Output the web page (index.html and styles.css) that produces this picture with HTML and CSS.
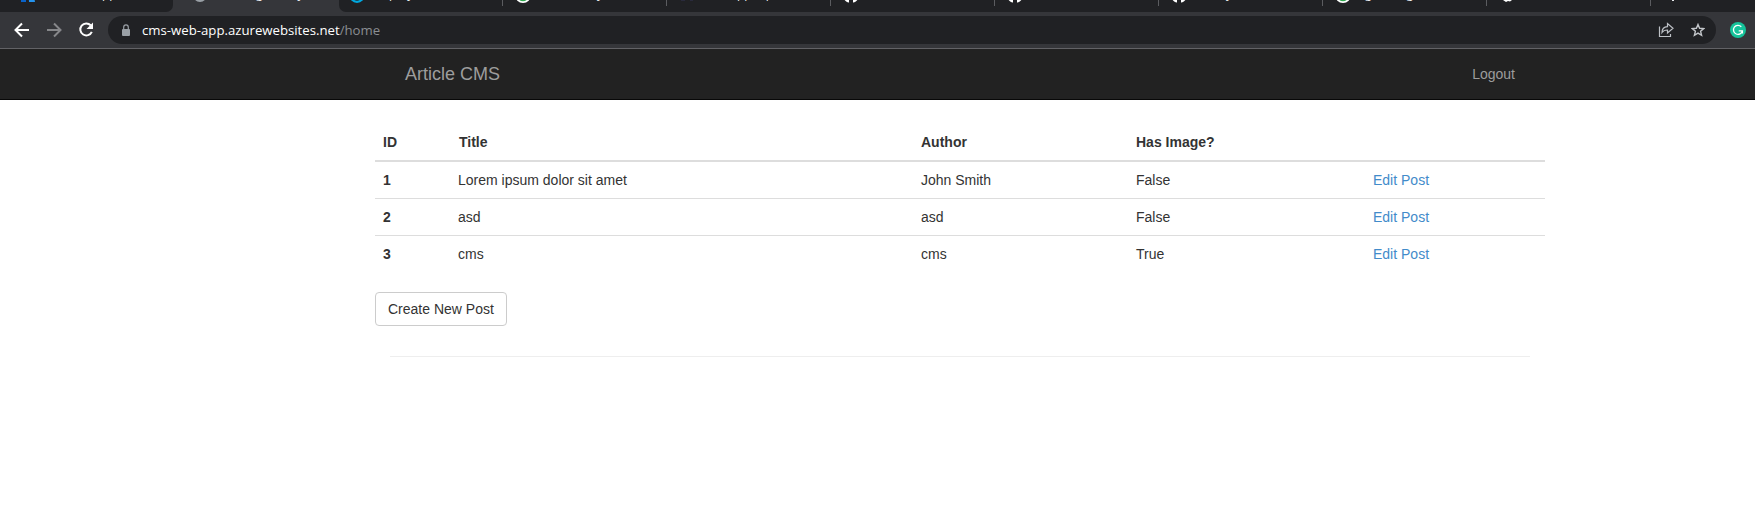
FILE: index.html
```html
<!DOCTYPE html>
<html lang="en">
<head>
<meta charset="utf-8">
<title>Article CMS</title>
<link rel="stylesheet" href="styles.css">
</head>
<body>
<svg class="defs" width="0" height="0" aria-hidden="true">
  <symbol id="cat" viewBox="0 0 16 16"><path fill="#fff" d="M8 0a8 8 0 0 0-2.900 15.500c.5.1.9-.1.9-.5v-2c-2 .4-2.600-.7-2.800-1.200l-.8-1c.8-.2 1.400.5 1.600.9.6.9 1.400.8 2 .5.1-.5.3-.8.5-1C4.500 11 3 10.200 3 7.400c0-.9.3-1.600.8-2.200 0-.6-.1-1.300.2-2 0 0 .8-.2 2.200.8a8 8 0 0 1 3.600 0c1.400-1 2.200-.8 2.200-.8.3.7.2 1.400.2 2 .5.6.8 1.300.8 2.200 0 2.800-1.500 3.600-3.500 3.800.3.3.5.7.5 1.400V15c0 .4.4.6.9.5A8 8 0 0 0 8 0Z"/></symbol>
  <symbol id="green" viewBox="0 0 16 16"><circle cx="8" cy="8" r="8" fill="#fff"/><circle cx="8" cy="8" r="6.200" fill="#2fa84f"/></symbol>
</svg>
<div class="browser">
  <div class="tabstrip">
    <div class="tabs-left">
      <div class="tab first"><svg class="fav" viewBox="0 0 16 16"><path fill="#0a63c9" d="M1 0h5v15H1Z"/><path fill="#2493ee" d="M8 0h4l3 15H9Z"/></svg><span class="g66">pp</span></div>
    </div>
    <div class="tab active"><svg class="fav" viewBox="0 0 16 16"><circle cx="8" cy="8" r="7" fill="#9aa0a6"/></svg><span class="g48">g</span><span class="g30">y</span></div>
    <div class="tabs-right">
      <div class="tab"><svg class="fav" viewBox="0 0 16 16"><circle cx="8" cy="8" r="6.800" fill="none" stroke="#00a8df" stroke-width="2.200"/></svg><span class="g24">p</span><span class="g11">y</span></div>
      <div class="tab"><svg class="fav"><use href="#green"/></svg><span class="g66">y</span></div>
      <div class="tab"><svg class="fav" viewBox="0 0 16 16"><path fill="#292a3c" d="M2 13h4v1H2zM11 13h3v1h-3z"/></svg><span class="g42">pp</span><span class="g14">p</span></div>
      <div class="tab"><svg class="fav"><use href="#cat"/></svg></div>
      <div class="tab"><svg class="fav"><use href="#cat"/></svg></div>
      <div class="tab"><svg class="fav"><use href="#cat"/></svg><span class="g39">y</span></div>
      <div class="tab"><svg class="fav"><use href="#green"/></svg><span class="g14">g</span><span class="g30">g</span></div>
      <div class="tab"><svg class="fav" viewBox="0 0 16 16"><path fill="#fff" d="M3 8h10v5l-2 1.500-2-.5-2 1-3-2Z"/></svg></div>
      <div class="tab last"><svg class="fav" viewBox="0 0 16 16"><path fill="#e8eaed" d="M9 10h2v4H9Z"/></svg></div>
    </div>
  </div>
  <div class="toolbar">
    <svg class="back" width="16" height="16" viewBox="0 0 16 16" fill="none" stroke="#fff" stroke-width="2"><path d="M15 8H2M8 1.500 1.500 8 8 14.500"/></svg>
    <svg class="forward" width="16" height="16" viewBox="0 0 16 16" fill="none" stroke="#86878a" stroke-width="2"><path d="M1 8h13M8 1.500 14.500 8 8 14.500"/></svg>
    <svg class="reload" width="16" height="16" viewBox="0 0 16 16"><path d="M12.700 3.300A6 6 0 1 0 13.800 9.800" fill="none" stroke="#fff" stroke-width="2"/><path fill="#fff" d="M15 .5V7H8.500Z"/></svg>
    <div class="omnibox">
      <svg class="lock" width="10" height="13" viewBox="0 0 10 13"><rect x="1" y="5" width="8" height="7" rx="1" fill="#9aa0a6"/><path d="M2.700 5.500V3.200a2.300 2.300 0 0 1 4.600 0v2.300" fill="none" stroke="#9aa0a6" stroke-width="1.200"/></svg>
      <span class="url"><span class="host">cms-web-app.azurewebsites.net</span><span class="path">/home</span></span>
      <svg class="share" width="16" height="16" viewBox="0 0 16 16" fill="none" stroke="#bdc1c6" stroke-width="1.200"><path d="M1.500 4.500v10h11V12"/><path d="M4 10.500C4 6.500 6.500 4.800 9.500 4.600V1.600L15 6.300 9.500 11V8C7 8 5.200 8.700 4 10.500Z"/></svg>
      <svg class="star" width="14" height="14" viewBox="0 0 14 14" fill="none" stroke="#c3c6ca" stroke-width="1.400"><path d="m7 1.500 1.600 3.800 4.100.3-3.100 2.700 1 4L7 10.100l-3.600 2.200 1-4L1.300 5.600l4.100-.3Z"/></svg>
    </div>
    <svg class="ext" width="16" height="16" viewBox="0 0 16 16"><circle cx="8" cy="8" r="8" fill="#15c39a"/><path d="M11.300 4.800A4.500 4.500 0 1 0 12.400 8.800H8.700M12.400 8.800V11.500" fill="none" stroke="#fff" stroke-width="1.300"/></svg>
  </div>
</div>
<nav class="navbar">
  <div class="navbar-inner">
    <a class="brand">Article CMS</a>
    <a class="logout">Logout</a>
  </div>
</nav>
<main class="container">
  <table class="table">
    <colgroup><col class="c-id"><col class="c-title"><col class="c-author"><col class="c-image"><col class="c-edit"></colgroup>
    <thead><tr><th>ID</th><th class="h-title">Title</th><th>Author</th><th>Has Image?</th><th></th></tr></thead>
    <tbody>
      <tr><th>1</th><td>Lorem ipsum dolor sit amet</td><td>John Smith</td><td>False</td><td><a>Edit Post</a></td></tr>
      <tr><th>2</th><td>asd</td><td>asd</td><td>False</td><td><a>Edit Post</a></td></tr>
      <tr><th>3</th><td>cms</td><td>cms</td><td>True</td><td><a>Edit Post</a></td></tr>
    </tbody>
  </table>
  <button class="btn">Create New Post</button>
  <hr class="rule">
</main>
</body>
</html>
```
FILE: styles.css
```css
* { box-sizing: border-box; }
body {
  margin: 0;
  background: #fff;
  color: #333;
  font: 14px/20px "Liberation Sans", Arial, sans-serif;
  overflow: hidden;
}
svg { display: block; flex: none; }
.defs { position: absolute; }

.browser { height: 49px; background: #35363a; border-bottom: 1px solid #626266; }
.tabstrip { display: flex; height: 12px; overflow: hidden; }
.tabs-left { width: 173px; background: #202124; border-radius: 0 0 7px 0; padding-left: 8px; }
.tabs-right { display: flex; flex: 1; background: #202124; border-radius: 0 0 0 7px; overflow: hidden; }
.tab {
  display: flex;
  flex: none;
  width: 164px;
  height: 5.5px;
  padding-left: 12px;
  border-right: 1px solid #5b5c60;
  color: #f1f3f4;
  font: 12px/16px "Open Sans", sans-serif;
}
.tabs-right .tab:first-child { padding-left: 10px; }
.tab.first, .tab.active, .tab.last { border-right: 0; }
.tab.active { width: 166px; padding-left: 19px; }
.tab.last { width: 105px; }
.fav { width: 16px; height: 16px; margin-top: -13px; }
.tab span { margin-top: -14px; height: 16px; }
.g11 { margin-left: 11px; }
.g14 { margin-left: 14px; }
.g24 { margin-left: 24px; }
.g30 { margin-left: 35px; }
.g39 { margin-left: 39px; }
.g42 { margin-left: 42px; }
.g48 { margin-left: 48px; }
.g66 { margin-left: 66px; }

.toolbar { display: flex; align-items: center; height: 36px; padding-left: 14px; }
.forward, .reload { margin-left: 16px; }
.omnibox {
  display: flex;
  align-items: center;
  width: 1608px;
  height: 28px;
  margin-left: 14px;
  padding: 0 11px 0 13px;
  border-radius: 14px;
  background: #202124;
}
.url {
  flex: 1;
  margin-left: 11px;
  font: 13.2px/20px "Open Sans", sans-serif;
  white-space: nowrap;
}
.host { color: #fff; }
.path { color: #8b8e92; }
.star { margin-left: 17px; }
.ext { margin-left: 14px; }

.navbar { height: 51px; background: #222; border-bottom: 1px solid #080808; }
.navbar-inner {
  display: flex;
  justify-content: space-between;
  width: 1110px;
  margin-left: 405px;
  padding: 15px 0;
  color: #9d9d9d;
}
.brand { font-size: 18px; }

.container { width: 1170px; margin-left: 375px; padding-top: 24px; }
.table { width: 1170px; table-layout: fixed; border-collapse: separate; border-spacing: 0; margin-bottom: 20px; }
.c-id { width: 75px; }
.c-title { width: 463px; }
.c-author { width: 215px; }
.c-image { width: 237px; }
.c-edit { width: 180px; }
.table th, .table td { padding: 8px; text-align: left; }
.table thead th { border-bottom: 2px solid #ddd; }
.table thead .h-title { padding-left: 9px; }
.table tbody tr + tr > * { border-top: 1px solid #ddd; }
.table a { color: #428bca; }
.btn {
  display: block;
  height: 34px;
  padding: 6px 12px;
  border: 1px solid #ccc;
  border-radius: 4px;
  background: #fff;
  color: #333;
  font: 14px/20px "Liberation Sans", Arial, sans-serif;
}
.rule { margin: 30px 15px 0; border: 0; border-top: 1px solid #eee; }
```
